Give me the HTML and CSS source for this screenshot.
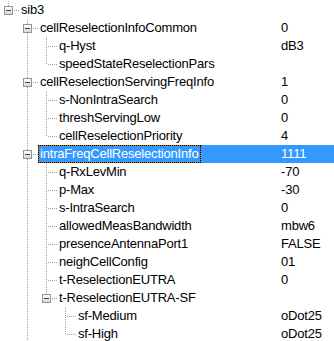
FILE: index.html
```html
<!DOCTYPE html>
<html lang="en">
<head>
    <meta charset="UTF-8">
    <title>sib3</title>
    <link rel="stylesheet" href="styles.css">
</head>
<body>

    <div class="tree">

        <div class="row">
            <span class="g elbow"><span class="box"></span></span>
            <div class="item"><span class="label">sib3</span></div>
        </div>

        <div class="row">
            <span class="g"></span>
            <span class="g tee"><span class="box"></span></span>
            <div class="item"><span class="label">cellReselectionInfoCommon</span><span class="value">0</span></div>
        </div>
        <div class="row">
            <span class="g"></span><span class="g pipe"></span><span class="g tee"></span>
            <div class="item"><span class="label">q-Hyst</span><span class="value">dB3</span></div>
        </div>
        <div class="row">
            <span class="g"></span><span class="g pipe"></span><span class="g elbow"></span>
            <div class="item"><span class="label">speedStateReselectionPars</span></div>
        </div>

        <div class="row">
            <span class="g"></span>
            <span class="g tee"><span class="box"></span></span>
            <div class="item"><span class="label">cellReselectionServingFreqInfo</span><span class="value">1</span></div>
        </div>
        <div class="row">
            <span class="g"></span><span class="g pipe"></span><span class="g tee"></span>
            <div class="item"><span class="label">s-NonIntraSearch</span><span class="value">0</span></div>
        </div>
        <div class="row">
            <span class="g"></span><span class="g pipe"></span><span class="g tee"></span>
            <div class="item"><span class="label">threshServingLow</span><span class="value">0</span></div>
        </div>
        <div class="row">
            <span class="g"></span><span class="g pipe"></span><span class="g elbow"></span>
            <div class="item"><span class="label">cellReselectionPriority</span><span class="value">4</span></div>
        </div>

        <!-- selected node -->
        <div class="row">
            <span class="g"></span>
            <span class="g tee"><span class="box"></span></span>
            <div class="item selected"><span class="label">intraFreqCellReselectionInfo</span><span class="value">1111</span></div>
        </div>
        <div class="row">
            <span class="g"></span><span class="g pipe"></span><span class="g tee"></span>
            <div class="item"><span class="label">q-RxLevMin</span><span class="value">-70</span></div>
        </div>
        <div class="row">
            <span class="g"></span><span class="g pipe"></span><span class="g tee"></span>
            <div class="item"><span class="label">p-Max</span><span class="value">-30</span></div>
        </div>
        <div class="row">
            <span class="g"></span><span class="g pipe"></span><span class="g tee"></span>
            <div class="item"><span class="label">s-IntraSearch</span><span class="value">0</span></div>
        </div>
        <div class="row">
            <span class="g"></span><span class="g pipe"></span><span class="g tee"></span>
            <div class="item"><span class="label">allowedMeasBandwidth</span><span class="value">mbw6</span></div>
        </div>
        <div class="row">
            <span class="g"></span><span class="g pipe"></span><span class="g tee"></span>
            <div class="item"><span class="label">presenceAntennaPort1</span><span class="value">FALSE</span></div>
        </div>
        <div class="row">
            <span class="g"></span><span class="g pipe"></span><span class="g tee"></span>
            <div class="item"><span class="label">neighCellConfig</span><span class="value">01</span></div>
        </div>
        <div class="row">
            <span class="g"></span><span class="g pipe"></span><span class="g tee"></span>
            <div class="item"><span class="label">t-ReselectionEUTRA</span><span class="value">0</span></div>
        </div>
        <div class="row">
            <span class="g"></span><span class="g pipe"></span>
            <span class="g elbow"><span class="box"></span></span>
            <div class="item"><span class="label">t-ReselectionEUTRA-SF</span></div>
        </div>
        <div class="row">
            <span class="g"></span><span class="g pipe"></span><span class="g"></span><span class="g tee"></span>
            <div class="item"><span class="label">sf-Medium</span><span class="value">oDot25</span></div>
        </div>
        <div class="row">
            <span class="g"></span><span class="g pipe"></span><span class="g"></span><span class="g elbow"></span>
            <div class="item"><span class="label">sf-High</span><span class="value">oDot25</span></div>
        </div>

    </div>

</body>
</html>
```

FILE: styles.css
```css
* {
    margin: 0;
    padding: 0;
    box-sizing: border-box;
}

body {
    background: #fff;
    overflow: hidden;
    font-family: "Liberation Sans", Arial, sans-serif;
    font-size: 13px;
    letter-spacing: -0.2px;
    color: #000;
}

.tree {
    padding-top: 1px;
}

.row {
    display: flex;
    height: 18px;
}

/* guide cells: one per level, 19px wide, line runs at x = 8 */
.g {
    flex: none;
    width: 19px;
    height: 18px;
    background-repeat: no-repeat;
}

.pipe {
    background-image: repeating-linear-gradient(to bottom, #a0a0a0 0 1px, transparent 1px 2px);
    background-size: 1px 18px;
    background-position: 8px 0;
}

.tee {
    background-image:
        repeating-linear-gradient(to bottom, #a0a0a0 0 1px, transparent 1px 2px),
        repeating-linear-gradient(to right, #a0a0a0 0 1px, transparent 1px 2px);
    background-size: 1px 18px, 9px 1px;
    background-position: 8px 0, 10px 9px;
}

.elbow {
    background-image:
        repeating-linear-gradient(to bottom, #a0a0a0 0 1px, transparent 1px 2px),
        repeating-linear-gradient(to right, #a0a0a0 0 1px, transparent 1px 2px);
    background-size: 1px 10px, 9px 1px;
    background-position: 8px 0, 10px 9px;
}

/* expand / collapse button */
.box {
    display: flex;
    align-items: center;
    justify-content: center;
    width: 9px;
    height: 9px;
    margin: 5px 0 0 4px;
    border: 1px solid #959595;
    background: linear-gradient(#ffffff, #d8d8d8);
}

.box::before {
    content: "";
    width: 5px;
    height: 1px;
    background: #26427a;
}

.item {
    flex: 1;
    display: flex;
    align-items: center;
    line-height: 18px;
    white-space: nowrap;
}

.label {
    padding: 0 2px 0 1px;
    border: 1px solid transparent;
    line-height: 16px;
}

.value {
    margin-left: auto;
    width: 53px;
}

.selected {
    background: #3399ff;
    color: #fff;
}

.selected .label {
    border: 1px dotted #000;
    background: linear-gradient(#3399ff, #3399ff) padding-box, #cc6600 border-box;
}
```
